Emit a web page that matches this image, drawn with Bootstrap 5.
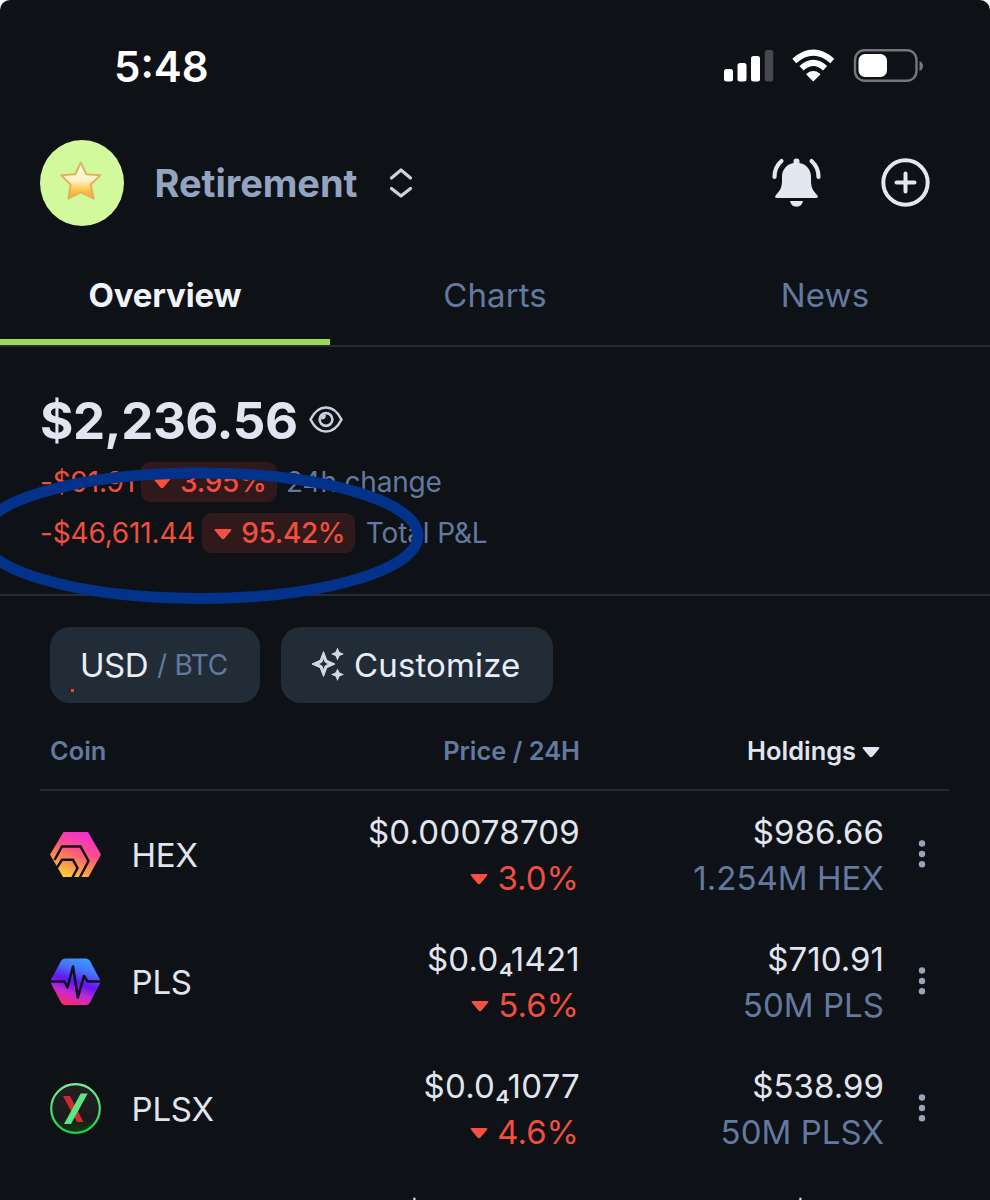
<!DOCTYPE html>
<html lang="en">
<head>
<meta charset="utf-8">
<meta name="viewport" content="width=device-width, initial-scale=1">
<title>Retirement portfolio</title>
<link href="https://cdn.jsdelivr.net/npm/bootstrap@5.3.0/dist/css/bootstrap.min.css" rel="stylesheet">
<style>
  :root { --ink:#0e1116; --text:#e1e5ef; --muted:#64799f; --loss:#f04e3e; --rule:#252c38; --chip:#222c37; }
  body { background:#fff; font-family:Inter, sans-serif; color:var(--text); overflow:hidden; }
  svg { display:block; flex:none; }
  .phone { height:1200px; background:var(--ink); border-radius:10px 10px 0 0; overflow:hidden; }
  .statusbar { height:132px; padding:0 67px 0 114px; }
  .clock { font-size:42px; font-weight:600; color:#fff; }
  .topbar { height:102px; padding:0 60px 0 40px; }
  .avatar { width:84px; height:86px; background:#d2f99b; }
  .portfolio-name { font-size:38px; font-weight:650; color:#94a3c0; margin-left:30.5px; padding-top:1px; letter-spacing:-.05px; }
  .tabs { height:113px; border-bottom:2px solid var(--rule); font-size:33px; }
  .tabs a { color:var(--muted); text-decoration:none; width:330px; padding-top:12px; letter-spacing:.1px; }
  .tabs a.active { color:#f0f3f9; font-weight:650; border-bottom:6px solid #9cdb58; padding-top:18px; letter-spacing:-.15px; }
  .summary { height:249px; padding:39px 40px 0; border-bottom:2px solid var(--rule); }
  .balance { font-size:51px; font-weight:700; line-height:70px; letter-spacing:-.45px; }
  .change { font-size:28px; height:40px; line-height:40px; white-space:nowrap; letter-spacing:-.17px; }
  .loss { color:var(--loss); }
  .soft { color:var(--muted); }
  .pill { background:#2f191a; border-radius:9px; height:40px; padding:0 10px 0 12px; font-weight:500; }
  .marker { left:0; top:110px; }
  .chips { padding:31px 50px 0; gap:21px; }
  .chip { height:76px; border-radius:20px; background:var(--chip); font-size:33px; color:#e9edf5; }
  .dot { width:3px; height:3px; background:#e0484c; left:21px; top:62px; }
  .grid-head { margin:0 41px 0 40px; height:88px; padding:10px 0 0 10px; border-bottom:2px solid var(--rule); font-size:25.4px; font-weight:600; }
  .coin-row { height:127px; padding:0 0 0 50px; font-size:33px; line-height:46px; }
  .c-name { width:240px; }
  .c-price { width:290px; }
  .price-value { letter-spacing:.22px; }
  .c-hold { width:304px; letter-spacing:.04px; }
  .c-menu { margin-left:34px; margin-top:-2px; }
</style>
</head>
<body>
<main class="phone">
  <header class="statusbar d-flex align-items-center justify-content-between">
    <span class="clock">5:48</span>
    <svg width="200" height="40" viewBox="723 46 200 40">
      <g fill="#fff">
        <rect x="724" y="69" width="9" height="12.500" rx="2.5"/><rect x="737.5" y="63" width="9" height="18.500" rx="2.5"/>
        <rect x="751" y="56" width="9" height="25.500" rx="2.5"/><rect x="764.800" y="50" width="8.500" height="31.500" rx="2.500" fill="#47494d"/>
        <path d="M813.300 81.500L806.500 74.800Q805.800 74 806.800 73.400Q813.300 68.500 819.800 73.400Q820.800 74 820.100 74.800Z"/>
      </g>
      <path d="M801.500 68.300Q813.300 57.400 825.100 68.300" fill="none" stroke="#fff" stroke-width="6"/>
      <path d="M794.300 61Q813.300 44.400 832.300 61" fill="none" stroke="#fff" stroke-width="6"/>
      <rect x="855" y="50.200" width="61.500" height="30.600" rx="9.500" fill="none" stroke="#75777a" stroke-width="2.400"/>
      <rect x="858.500" y="54" width="28.500" height="23" rx="6.500" fill="#fff"/>
      <path d="M919.500 61V71Q923 69.500 923 66T919.500 61Z" fill="#75777a"/>
    </svg>
  </header>

  <section class="topbar d-flex align-items-center">
    <div class="avatar rounded-circle d-flex align-items-center justify-content-center">
      <svg width="44" height="42" viewBox="0 0 44 42" style="margin-top:-4px;margin-left:-2px">
        <defs><linearGradient id="star" x1="0" y1="0" x2="0" y2="1"><stop offset=".1" stop-color="#fffbe6"/><stop offset=".5" stop-color="#fff2c6"/><stop offset=".75" stop-color="#ffc94d"/><stop offset="1" stop-color="#eda22e"/></linearGradient></defs>
        <path d="M21.800 2.500L27.200 14.200L41.300 15.200L31.600 24.600L34.800 38.500L21.800 32.400L9.300 38.500L11.600 24.600L2.300 15.200L16.300 14.200Z" fill="url(#star)" stroke="#e0b45e" stroke-width="2" stroke-linejoin="round"/>
      </svg>
    </div>
    <span class="portfolio-name">Retirement</span>
    <svg class="ms-auto" width="24" height="32" viewBox="389 167 24 32" fill="none" stroke="#cbd2df" stroke-width="3.200" stroke-linecap="round" stroke-linejoin="round" style="margin-right:358px"><path d="M391.500 178L401 170L410.500 178M391.500 188.500L401 196L410.500 188.500"/></svg>
    <svg width="50" height="50" viewBox="771 157 50 50" style="margin-right:59px;margin-top:-2px">
      <path d="M793.500 163V161Q793.500 158.500 796.500 158.500T799.500 161V163C807 164.500 811 170 811 177V181C811 188 813.500 191 817 195Q819.500 198 815.500 198H777.500Q773.500 198 776 195C779.500 191 782 188 782 181V177C782 170 786 164.500 793.500 163ZM790 201H803Q802 206.700 796.500 206.700T790 201Z" fill="#e3e7f0"/>
      <path d="M781.500 161Q774.500 167 774.500 177M811.500 161Q818.500 167 818.500 177" fill="none" stroke="#e3e7f0" stroke-width="4.200" stroke-linecap="round"/>
    </svg>
    <svg width="50" height="50" viewBox="0 0 50 50" fill="none" stroke="#e3e7f0" stroke-width="4"><circle cx="25.500" cy="24.500" r="22.200"/><path d="M25.500 15.500V33.500M16.500 24.500H34.500" stroke-linecap="round"/></svg>
  </section>

  <nav class="tabs d-flex">
    <a class="active d-flex align-items-center justify-content-center" href="#">Overview</a>
    <a class="d-flex align-items-center justify-content-center" href="#">Charts</a>
    <a class="d-flex align-items-center justify-content-center" href="#">News</a>
  </nav>

  <section class="summary position-relative">
    <div class="d-flex align-items-center">
      <span class="balance">$2,236.56</span>
      <svg width="34" height="27" viewBox="0 0 34 27" fill="none" stroke="#c9d0dd" stroke-width="2.600" style="margin-left:11px;margin-top:-3px"><path d="M1.500 13.500Q7.500 1.500 17 1.500T32.500 13.500Q26.500 25.500 17 25.500T1.500 13.500Z" stroke-linejoin="round"/><circle cx="17" cy="13.500" r="6.400"/><path d="M12 13.500Q17 14 17 8.500L12.500 9Z" fill="#c9d0dd" stroke="none"/></svg>
    </div>
    <div class="change d-flex align-items-center" style="margin-top:6px">
      <span class="loss">-$91.91</span>
      <span class="pill loss d-flex align-items-center" style="margin-left:5.500px"><svg width="18" height="12" viewBox="0 0 18 12" style="margin-top:1px"><path d="M2 1H16Q18.500 1 16.800 3L10.500 10.500Q9 12 7.500 10.500L1.200 3Q-.5 1 2 1Z" fill="#f7503f"/></svg><span style="margin-left:9.500px;letter-spacing:-.3px">3.95%</span></span>
      <span class="soft" style="margin-left:9.500px">24h change</span>
    </div>
    <div class="change d-flex align-items-center" style="margin-top:11px">
      <span class="loss">-$46,611.44</span>
      <span class="pill loss d-flex align-items-center" style="margin-left:7px"><svg width="18" height="12" viewBox="0 0 18 12" style="margin-top:2px"><path d="M2 1H16Q18.500 1 16.800 3L10.500 10.500Q9 12 7.500 10.500L1.200 3Q-.5 1 2 1Z" fill="#f7503f"/></svg><span style="margin-left:9px;letter-spacing:-.35px">95.42%</span></span>
      <span class="soft" style="margin-left:10.500px">Total P&amp;L</span>
    </div>
    <svg class="marker position-absolute" width="440" height="156" viewBox="0 457 440 156"><ellipse cx="199.500" cy="535.700" rx="218.500" ry="62.700" fill="none" stroke="#03328b" stroke-width="11"/></svg>
  </section>

  <section class="chips d-flex">
    <div class="chip position-relative d-flex align-items-center" style="width:210.400px;padding-left:30px"><span style="letter-spacing:-.5px;padding-top:1px">USD</span><span class="soft" style="font-size:28px;margin-left:9px;letter-spacing:-.3px">/ BTC</span><i class="dot position-absolute"></i></div>
    <div class="chip d-flex align-items-center" style="width:271.500px;padding-left:29.600px">
      <svg width="34" height="36" viewBox="0 0 34 36" fill="#d3d9e4"><path fill-rule="evenodd" d="M12.500 4.500L15.800 13.300L24 17L15.800 20.700L12.500 29.500L9.200 20.700L1 17L9.200 13.300ZM12.500 11L10.800 15.200L7 17L10.800 18.800L12.500 23L14.200 18.800L18 17L14.200 15.200Z" stroke="#d3d9e4" stroke-width="1" stroke-linejoin="round"/><path d="M26.500 .5L28.500 5L33 7L28.500 9L26.500 13.500L24.500 9L20 7L24.500 5ZM26.500 21.500L28.500 25.500L33 27.500L28.500 29.500L26.500 34L24.500 29.500L20 27.500L24.500 25.500Z"/></svg>
      <span style="margin-left:9px;letter-spacing:.15px;padding-top:1px">Customize</span>
    </div>
  </section>

  <section class="grid-head d-flex align-items-center soft">
    <span class="c-name">Coin</span>
    <span class="c-price text-end">Price / 24H</span>
    <span class="d-flex align-items-center justify-content-end" style="width:300px;color:var(--text)">Holdings<svg width="18" height="12" viewBox="0 0 18 12" style="margin-left:6px;margin-top:2px"><path d="M2 1H16Q18.500 1 16.800 3L10.500 10.500Q9 12 7.500 10.500L1.200 3Q-.5 1 2 1Z" fill="#e1e5ef"/></svg></span>
  </section>

  <section id="rows"></section>
</main>

<svg width="0" height="0" class="position-absolute">
  <defs>
    <linearGradient id="hexG" x1=".75" y1="0" x2=".3" y2="1"><stop offset="0" stop-color="#f02be0"/><stop offset=".4" stop-color="#fa4e88"/><stop offset=".68" stop-color="#fb8a50"/><stop offset="1" stop-color="#fbcf38"/></linearGradient>
    <linearGradient id="plsG" x1=".7" y1="0" x2=".35" y2="1"><stop offset="0" stop-color="#38a0f8"/><stop offset=".25" stop-color="#4673fa"/><stop offset=".52" stop-color="#6513f4"/><stop offset=".75" stop-color="#c62ad0"/><stop offset="1" stop-color="#fa2b66"/></linearGradient>
    <linearGradient id="xG" x1="0" y1="0" x2="0" y2="1"><stop offset="0" stop-color="#78f09a"/><stop offset="1" stop-color="#1fd13f"/></linearGradient>
    <linearGradient id="xBg" x1="0" y1="0" x2="0" y2="1"><stop offset="0" stop-color="#222026"/><stop offset=".7" stop-color="#1a1a1b"/><stop offset="1" stop-color="#0d3a14"/></linearGradient>
  </defs>
</svg>

<script>
  const icons = {
    HEX: '<path d="M13.500 3H38L51 25.500L38.500 48H13L0 25.500Z" fill="url(#hexG)"/><path d="M4.500 31L12 17.500H30.500L38.500 32L29.800 48.500" fill="none" stroke="#170f18" stroke-width="2.500"/><path d="M7 38.500L12 30.800H23L27.500 39L22.500 48.500" fill="none" stroke="#170f18" stroke-width="2.500"/>',
    PLS: '<path d="M15 2.500H36Q38.500 2.500 40 5L51 25.500L40 46.500Q38.500 49 36 49H15Q12.500 49 11 46.500L0 25.500L11 5Q12.500 2.500 15 2.500Z" fill="url(#plsG)"/><path d="M0 25.500H14.500L17.500 31.500L23 10.500L27.800 41.500L34 20L37.500 25.500H51" fill="none" stroke="#0f1022" stroke-width="2.600" stroke-linejoin="round"/>',
    PLSX: '<circle cx="25.500" cy="25.500" r="24.300" fill="url(#xBg)" stroke="url(#xG)" stroke-width="2.200"/><path d="M13 13H20L33.500 39H27Z" fill="#cf292f"/><path d="M30.700 10.500H37.700L21 41H14Z" fill="#5fe580"/>'
  };
  const coins = [
    ['HEX', '$0.00078709', '3.0%', '$986.66', '1.254M HEX'],
    ['PLS', '$0.0₄1421', '5.6%', '$710.91', '50M PLS'],
    ['PLSX', '$0.0₄1077', '4.6%', '$538.99', '50M PLSX']
  ];
  const row = ([name, price, pct, value, amount]) => `
    <div class="coin-row d-flex align-items-center">
      <div class="c-name d-flex align-items-center"><svg width="51" height="51" viewBox="0 0 51 51">${icons[name]}</svg><span style="margin-left:30.500px;letter-spacing:-.2px">${name}</span></div>
      <div class="c-price text-end"><div class="price-value">${price}</div>
        <div class="loss d-flex align-items-center justify-content-end" style="padding-right:1px"><svg width="18" height="12" viewBox="0 0 18 12" style="margin-top:2px"><path d="M2 1H16Q18.500 1 16.800 3L10.500 10.500Q9 12 7.500 10.500L1.200 3Q-.5 1 2 1Z" fill="#f7503f"/></svg><span style="margin-left:9.500px">${pct}</span></div></div>
      <div class="c-hold text-end"><div>${value}</div><div class="soft">${amount}</div></div>
      <svg class="c-menu" width="8" height="28" viewBox="0 0 8 28" fill="#98a4bb"><circle cx="4" cy="3.500" r="3.200"/><circle cx="4" cy="14" r="3.200"/><circle cx="4" cy="24.300" r="3.200"/></svg>
    </div>`;
  document.getElementById('rows').innerHTML = coins.map(row).join('') + `
    <div class="coin-row d-flex align-items-center">
      <div class="c-name"></div>
      <div class="c-price text-end"><div style="padding-right:155px">$</div><div>&nbsp;</div></div>
      <div class="c-hold text-end"><div style="padding-right:73px">$</div><div>&nbsp;</div></div>
    </div>`;
</script>
<script src="https://cdn.jsdelivr.net/npm/bootstrap@5.3.0/dist/js/bootstrap.bundle.min.js"></script>
</body>
</html>
